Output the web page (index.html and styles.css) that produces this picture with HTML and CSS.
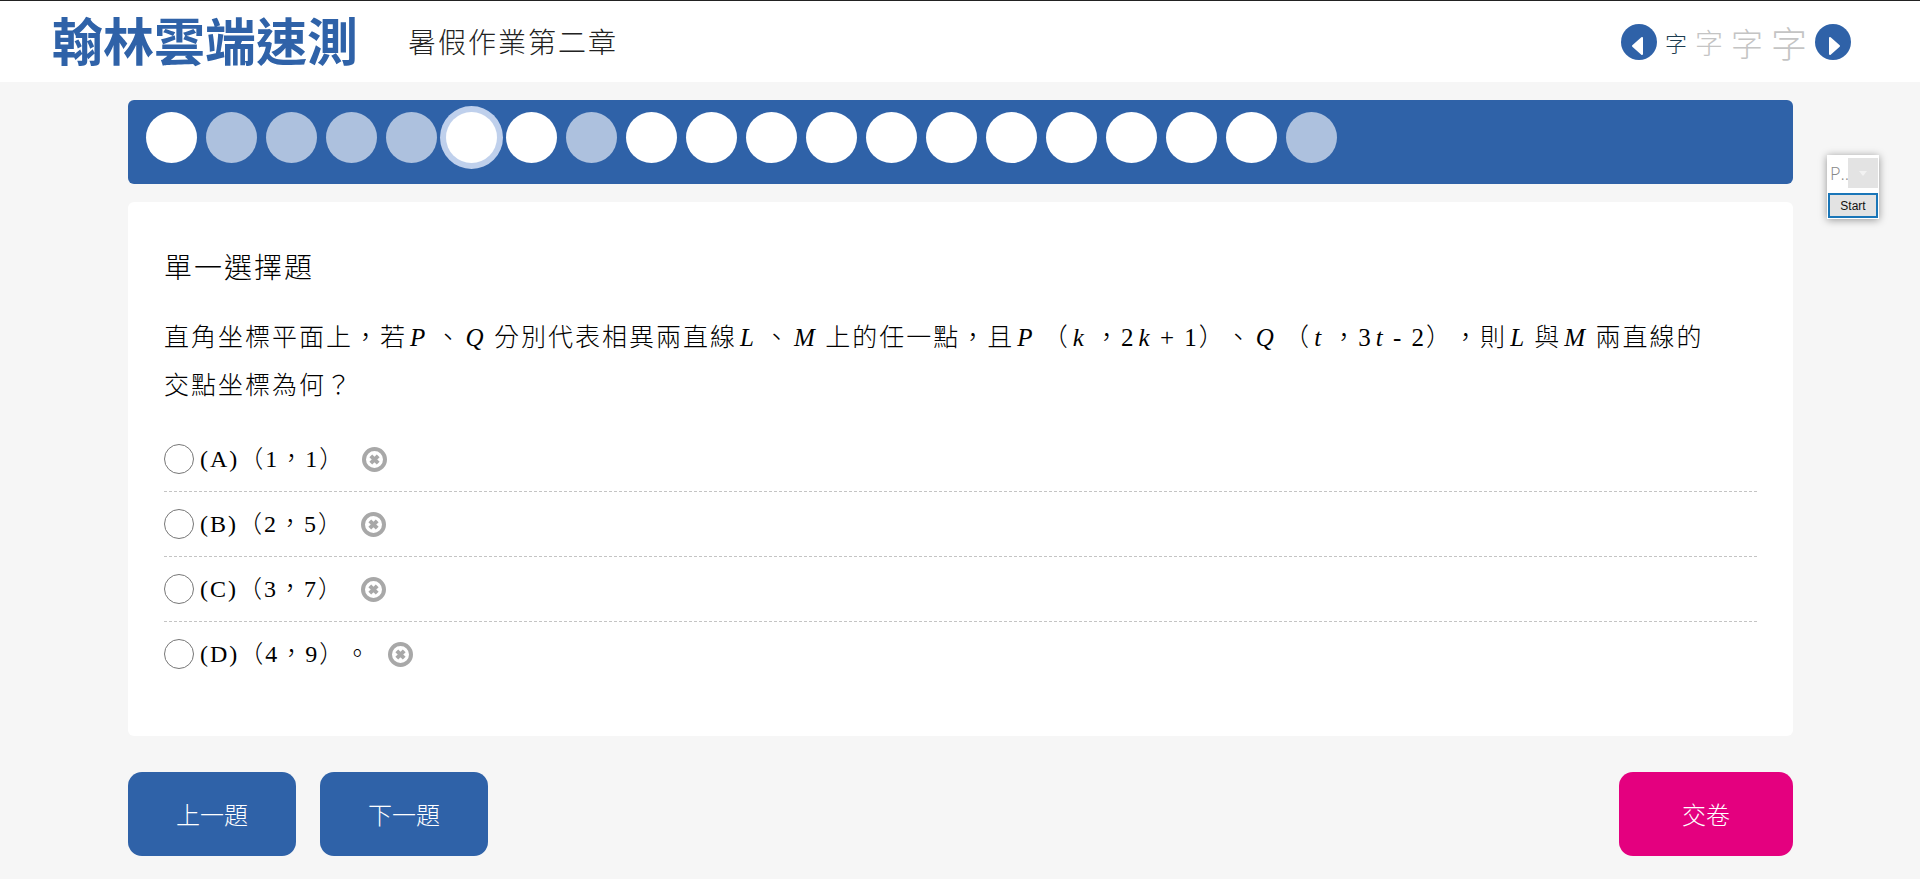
FILE: index.html
```
<!DOCTYPE html>
<html lang="zh-Hant">
<head>
  <meta charset="UTF-8">
  <meta name="viewport" content="width=device-width, initial-scale=1.0">
  <title>翰林雲端速測</title>
  <link rel="stylesheet" href="styles.css">
</head>
<body>
  <header class="header">
    <div class="logo">翰林雲端速測</div>
    <h1 class="title">暑假作業第二章</h1>
    <div class="font-size">
      <button type="button" class="arrow" aria-label="縮小">
        <svg viewBox="0 0 36 36"><path d="M12 22L21 14V30Z"/></svg>
      </button>
      <button type="button" class="size size-1 on">字</button>
      <button type="button" class="size size-2">字</button>
      <button type="button" class="size size-3">字</button>
      <button type="button" class="size size-4">字</button>
      <button type="button" class="arrow" aria-label="放大">
        <svg viewBox="0 0 36 36"><path d="M24 22L15 14V30Z"/></svg>
      </button>
    </div>
  </header>

  <main class="main">
    <nav class="numbers">
      <button type="button" class="number" aria-label="1"></button>
      <button type="button" class="number done" aria-label="2"></button>
      <button type="button" class="number done" aria-label="3"></button>
      <button type="button" class="number done" aria-label="4"></button>
      <button type="button" class="number done" aria-label="5"></button>
      <button type="button" class="number now" aria-label="6"></button>
      <button type="button" class="number" aria-label="7"></button>
      <button type="button" class="number done" aria-label="8"></button>
      <button type="button" class="number" aria-label="9"></button>
      <button type="button" class="number" aria-label="10"></button>
      <button type="button" class="number" aria-label="11"></button>
      <button type="button" class="number" aria-label="12"></button>
      <button type="button" class="number" aria-label="13"></button>
      <button type="button" class="number" aria-label="14"></button>
      <button type="button" class="number" aria-label="15"></button>
      <button type="button" class="number" aria-label="16"></button>
      <button type="button" class="number" aria-label="17"></button>
      <button type="button" class="number" aria-label="18"></button>
      <button type="button" class="number" aria-label="19"></button>
      <button type="button" class="number done" aria-label="20"></button>
    </nav>

    <section class="card">
      <h2 class="type">單一選擇題</h2>
      <p class="question">直角坐標平面上，若<i>P</i> 、<i>Q</i> 分別代表相異兩直線<i>L</i> 、<i>M</i> 上的任一點，且<i>P</i> （<i>k</i> ，2<i>k</i> + 1）、<i>Q</i> （<i>t</i> ，3<i>t</i> - 2），則<i>L</i> 與<i>M</i> 兩直線的交點坐標為何？</p>
      <ul class="options">
        <li class="option">
          <input type="radio" name="answer" id="a">
          <label for="a">(A)（1，1）</label>
          <button type="button" class="remove" aria-label="刪去 A">
            <svg viewBox="0 0 25 25"><circle cx="12.5" cy="12.5" r="10.5"/><path d="M8.8 8.8L16.2 16.2M16.2 8.8L8.8 16.2"/></svg>
          </button>
        </li>
        <li class="option">
          <input type="radio" name="answer" id="b">
          <label for="b">(B)（2，5）</label>
          <button type="button" class="remove" aria-label="刪去 B">
            <svg viewBox="0 0 25 25"><circle cx="12.5" cy="12.5" r="10.5"/><path d="M8.8 8.8L16.2 16.2M16.2 8.8L8.8 16.2"/></svg>
          </button>
        </li>
        <li class="option">
          <input type="radio" name="answer" id="c">
          <label for="c">(C)（3，7）</label>
          <button type="button" class="remove" aria-label="刪去 C">
            <svg viewBox="0 0 25 25"><circle cx="12.5" cy="12.5" r="10.5"/><path d="M8.8 8.8L16.2 16.2M16.2 8.8L8.8 16.2"/></svg>
          </button>
        </li>
        <li class="option">
          <input type="radio" name="answer" id="d">
          <label for="d">(D)（4，9）。</label>
          <button type="button" class="remove" aria-label="刪去 D">
            <svg viewBox="0 0 25 25"><circle cx="12.5" cy="12.5" r="10.5"/><path d="M8.8 8.8L16.2 16.2M16.2 8.8L8.8 16.2"/></svg>
          </button>
        </li>
      </ul>
    </section>

    <div class="buttons">
      <button type="button" class="btn">上一題</button>
      <button type="button" class="btn">下一題</button>
      <button type="button" class="btn submit">交卷</button>
    </div>
  </main>

  <div class="tool">
    <div class="tool-select">
      <select aria-label="Pen">
        <option>P..</option>
      </select>
      <svg viewBox="0 0 30 30"><path d="M11 13H19L15 18Z"/></svg>
    </div>
    <button type="button" class="start">Start</button>
  </div>
</body>
</html>
```
FILE: styles.css
```
* {
  box-sizing: border-box;
}
body {
  margin: 0;
  background-color: #f6f6f6;
  color: #000;
  font-family: "Noto Sans CJK TC", sans-serif;
  font-weight: 300;
  text-spacing-trim: space-all;
}
button {
  padding: 0;
  border: 0;
  background: none;
  font: inherit;
  cursor: pointer;
}
svg {
  display: block;
}

/* header */
.header {
  display: flex;
  align-items: center;
  height: 82px;
  padding: 0 69px 0 52px;
  border-top: 1px solid #222;
  background-color: #fff;
}
.logo {
  padding-bottom: 6px;
  color: #2f62a8;
  font-size: 51px;
  font-weight: 700;
  line-height: 74px;
}
.title {
  margin: 0 0 0 50px;
  padding-bottom: 2px;
  color: #222;
  font-size: 28px;
  font-weight: 300;
  letter-spacing: 2px;
}
.font-size {
  display: flex;
  align-items: center;
  gap: 8px;
  margin-left: auto;
}
.arrow {
  width: 36px;
  height: 36px;
  border-radius: 50%;
  background-color: #2f62a8;
}
.arrow path {
  fill: #fff;
  stroke: #fff;
  stroke-width: 2;
  stroke-linejoin: round;
}
.size {
  color: #c4c4c4;
  line-height: 40px;
}
.size.on {
  color: #1c3c50;
}
.size-1 { font-size: 22px; }
.size-2 { font-size: 28px; }
.size-3 { font-size: 32px; }
.size-4 { font-size: 36px; }

/* question numbers */
.main {
  padding: 18px 127px 24px 128px;
}
.numbers {
  display: flex;
  flex-wrap: wrap;
  gap: 9px;
  padding: 12px 18px 21px;
  border-radius: 6px;
  background-color: #2f62a8;
}
.number {
  width: 51px;
  height: 51px;
  border-radius: 50%;
  background-color: #fff;
}
.number.done {
  background-color: #adc1de;
}
.number.now {
  box-shadow: 0 0 0 6px #bfd0ec;
}

/* question */
.card {
  margin-top: 18px;
  padding: 40px 36px 50px;
  border-radius: 6px;
  background-color: #fff;
}
.type {
  margin: 0;
  font-size: 28px;
  font-weight: 300;
  line-height: 48px;
  letter-spacing: 2px;
}
.question {
  margin: 24px 0 17px;
  padding-right: 48px;
  font-family: "Liberation Serif", "Noto Sans CJK TC", serif;
  font-size: 25px;
  line-height: 48px;
  letter-spacing: 2px;
}
.question i {
  margin-left: 3px;
}
.options {
  margin: 0;
  padding: 0;
  list-style: none;
}
.option {
  display: flex;
  align-items: center;
  padding: 8px 0;
  border-bottom: 1px dashed #c4c4c4;
}
.option:last-child {
  border-bottom: 0;
}
.option input {
  appearance: none;
  width: 30px;
  height: 30px;
  margin: 0 6px 0 0;
  border: 1px solid #777;
  border-radius: 50%;
}
.option label {
  font-family: "Liberation Serif", "Noto Sans CJK TC", serif;
  font-size: 24px;
  line-height: 48px;
  letter-spacing: 2px;
}
.remove {
  width: 25px;
  height: 25px;
  margin-left: 17px;
}
.remove circle,
.remove path {
  fill: none;
  stroke: #a8a8a8;
  stroke-width: 4;
}

/* bottom buttons */
.buttons {
  display: flex;
  gap: 24px;
  margin-top: 36px;
}
.btn {
  width: 168px;
  height: 84px;
  padding-bottom: 2px;
  border-radius: 14px;
  background-color: #2f62a8;
  color: #fff;
  font-size: 24px;
}
.submit {
  width: 174px;
  margin-left: auto;
  background-color: #e4007f;
}

/* floating tool */
.tool {
  position: absolute;
  top: 155px;
  right: 41px;
  width: 52px;
  padding: 3px 1px 1px;
  background-color: #fff;
  box-shadow: 0 1px 8px rgba(0, 0, 0, 0.4);
}
.tool-select {
  display: flex;
}
.tool-select select {
  appearance: none;
  flex: 1;
  min-width: 0;
  padding: 0 0 0 2px;
  border: 0;
  background: none;
  color: #888;
  font-family: "Open Sans", sans-serif;
  font-size: 18px;
  font-weight: 300;
}
.tool-select svg {
  width: 30px;
  height: 30px;
  background-color: #e3e3e3;
}
.tool-select path {
  fill: #f2f2f2;
}
.start {
  width: 100%;
  height: 25px;
  margin-top: 5px;
  border: 2px solid #1a76b8;
  background-color: #e3e3e3;
  color: #111;
  font-family: "Liberation Sans", sans-serif;
  font-size: 12px;
  font-weight: 400;
}
```
